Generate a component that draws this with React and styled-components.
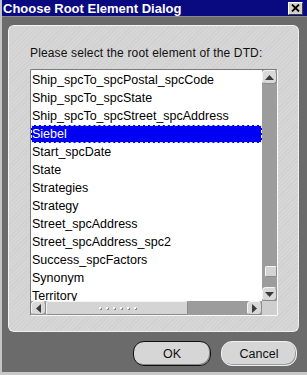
import React from "react";
import styled, { createGlobalStyle } from "styled-components";

const GlobalStyle = createGlobalStyle`
  html, body {
    margin: 0;
    padding: 0;
    background: #6b6b6b;
  }
  * {
    box-sizing: border-box;
  }
`;

const items = [
  "Ship_spcTo_spcPostal_spcCode",
  "Ship_spcTo_spcState",
  "Ship_spcTo_spcStreet_spcAddress",
  "Siebel",
  "Start_spcDate",
  "State",
  "Strategies",
  "Strategy",
  "Street_spcAddress",
  "Street_spcAddress_spc2",
  "Success_spcFactors",
  "Synonym",
  "Territory",
];

const Dialog = () => {
  return (
    <Window>
      <GlobalStyle />
      <TitleBar>
        <Title>Choose Root Element Dialog</Title>
        <CloseButton>
          <svg width="9" height="8" viewBox="0 0 9 8">
            <path d="M1 0.5 L8 7.5 M8 0.5 L1 7.5" stroke="#000" strokeWidth="1.8" />
          </svg>
        </CloseButton>
      </TitleBar>
      <Body>
        <Panel>
          <Prompt>Please select the root element of the DTD:</Prompt>
          <ListBox>
            <Viewport>
              {items.map((item) => (
                <Row key={item} selected={item === "Siebel"}>
                  {item}
                </Row>
              ))}
            </Viewport>
            <VScroll>
              <ArrowButton>
                <svg width="9" height="5" viewBox="0 0 9 5">
                  <path d="M0 5 L4.5 0 L9 5 Z" fill="#3a3a3a" />
                </svg>
              </ArrowButton>
              <Track>
                <VThumb />
              </Track>
              <ArrowButton>
                <svg width="9" height="5" viewBox="0 0 9 5">
                  <path d="M0 0 L4.5 5 L9 0 Z" fill="#3a3a3a" />
                </svg>
              </ArrowButton>
            </VScroll>
            <HScroll>
              <ArrowButton>
                <svg width="5" height="9" viewBox="0 0 5 9">
                  <path d="M5 0 L0 4.5 L5 9 Z" fill="#3a3a3a" />
                </svg>
              </ArrowButton>
              <HTrack>
                <HThumb>
                  <Grip>
                    {Array.from({ length: 6 }).map((_, i) => (
                      <Dot key={i} />
                    ))}
                  </Grip>
                </HThumb>
              </HTrack>
              <ArrowButton>
                <svg width="5" height="9" viewBox="0 0 5 9">
                  <path d="M0 0 L5 4.5 L0 9 Z" fill="#3a3a3a" />
                </svg>
              </ArrowButton>
            </HScroll>
            <Corner />
          </ListBox>
        </Panel>
        <Footer>
          <PillButton primary>OK</PillButton>
          <PillButton>Cancel</PillButton>
        </Footer>
      </Body>
    </Window>
  );
};

const Window = styled.div`
  width: 307px;
  height: 375px;
  display: flex;
  flex-direction: column;
  background: #6b6b6b;
  border-left: 2px solid #c4c4c4;
  border-bottom: 3px solid #c8c8c8;
  font-family: "Liberation Sans", Arial, sans-serif;
  overflow: hidden;
`;

const TitleBar = styled.div`
  height: 17px;
  margin-left: -2px;
  display: flex;
  align-items: center;
  justify-content: space-between;
  padding: 0 4px 0 3px;
  background: #0a0a80;
  border-bottom: 1px solid #8a8a8a;
`;

const Title = styled.span`
  color: #fff;
  font-weight: bold;
  font-size: 13px;
`;

const CloseButton = styled.div`
  width: 15px;
  height: 13px;
  display: flex;
  align-items: center;
  justify-content: center;
  background: #d4d0c8;
  border: 1px solid;
  border-color: #fff #404040 #404040 #fff;
`;

const Body = styled.div`
  flex: 1;
  display: flex;
  flex-direction: column;
  padding: 8px 8px 0 6px;
`;

const Panel = styled.div`
  height: 307px;
  display: flex;
  flex-direction: column;
  padding: 20px 0 0 21px;
  border-radius: 6px;
  background: repeating-linear-gradient(
    135deg,
    #d6d6d6 0px,
    #d6d6d6 2px,
    #d0d0d0 2px,
    #d0d0d0 3px
  );
  border: 1px solid;
  border-color: #f4f4f4 #f0f0f0 #f0f0f0 #f4f4f4;
`;

const Prompt = styled.div`
  font-size: 12px;
  color: #111;
  height: 23px;
  letter-spacing: 0.15px;
`;

const ListBox = styled.div`
  width: 248px;
  height: 247px;
  display: grid;
  grid-template-columns: 1fr 15px;
  grid-template-rows: 1fr 14px;
  background: #fff;
  border: 1px solid;
  border-color: #7a7a7a #f8f8f8 #f8f8f8 #7a7a7a;
  border-radius: 2px;
`;

const Viewport = styled.div`
  overflow: hidden;
  padding-top: 1px;
`;

const Row = styled.div`
  height: 18px;
  line-height: 18px;
  padding-left: 1px;
  font-size: 12.5px;
  white-space: nowrap;
  color: ${(p) => (p.selected ? "#fff" : "#000")};
  background: ${(p) => (p.selected ? "#0000f2" : "transparent")};
  outline: ${(p) => (p.selected ? "1px dashed #e8e8ff" : "none")};
  outline-offset: -1px;
`;

const VScroll = styled.div`
  display: flex;
  flex-direction: column;
  background: #9c9c9c;
`;

const ArrowButton = styled.div`
  width: 15px;
  height: 14px;
  flex-shrink: 0;
  display: flex;
  align-items: center;
  justify-content: center;
  background: #d8d8d8;
  border: 1px solid;
  border-color: #f4f4f4 #8a8a8a #8a8a8a #f4f4f4;
  border-radius: 4px;
`;

const Track = styled.div`
  flex: 1;
  display: flex;
  flex-direction: column;
  justify-content: flex-end;
  padding-bottom: 10px;
`;

const VThumb = styled.div`
  height: 11px;
  margin-left: 3px;
  background: #d4d4d4;
  border: 1px solid;
  border-color: #f4f4f4 #8a8a8a #8a8a8a #f4f4f4;
  border-radius: 2px;
`;

const HScroll = styled.div`
  display: flex;
  background: #9c9c9c;
`;

const HTrack = styled.div`
  flex: 1;
  display: flex;
`;

const HThumb = styled.div`
  width: 142px;
  display: flex;
  align-items: center;
  justify-content: center;
  background: #d4d4d4;
  border: 1px solid;
  border-color: #f4f4f4 #8a8a8a #8a8a8a #f4f4f4;
  border-radius: 2px;
`;

const Grip = styled.div`
  display: flex;
  gap: 5px;
`;

const Dot = styled.span`
  width: 2px;
  height: 2px;
  background: #fff;
  box-shadow: 1px 1px 0 #8a8a8a;
`;

const Corner = styled.div`
  background: #cfcfcf;
`;

const Footer = styled.div`
  display: flex;
  justify-content: flex-end;
  gap: 10px;
  padding: 9px 2px 0 0;
`;

const PillButton = styled.button`
  width: ${(p) => (p.primary ? "78px" : "76px")};
  height: 25px;
  border-radius: 11px;
  font-family: "Liberation Sans", Arial, sans-serif;
  font-size: 12.5px;
  color: #111;
  background: #d6d6d6;
  border: ${(p) => (p.primary ? "1.5px solid #111" : "1px solid #f0f0f0")};
  box-shadow: ${(p) =>
    p.primary ? "inset -1px -1px 0 #888" : "inset -1px -1px 0 #9a9a9a"};
  padding: 0;
`;

export default Dialog;
